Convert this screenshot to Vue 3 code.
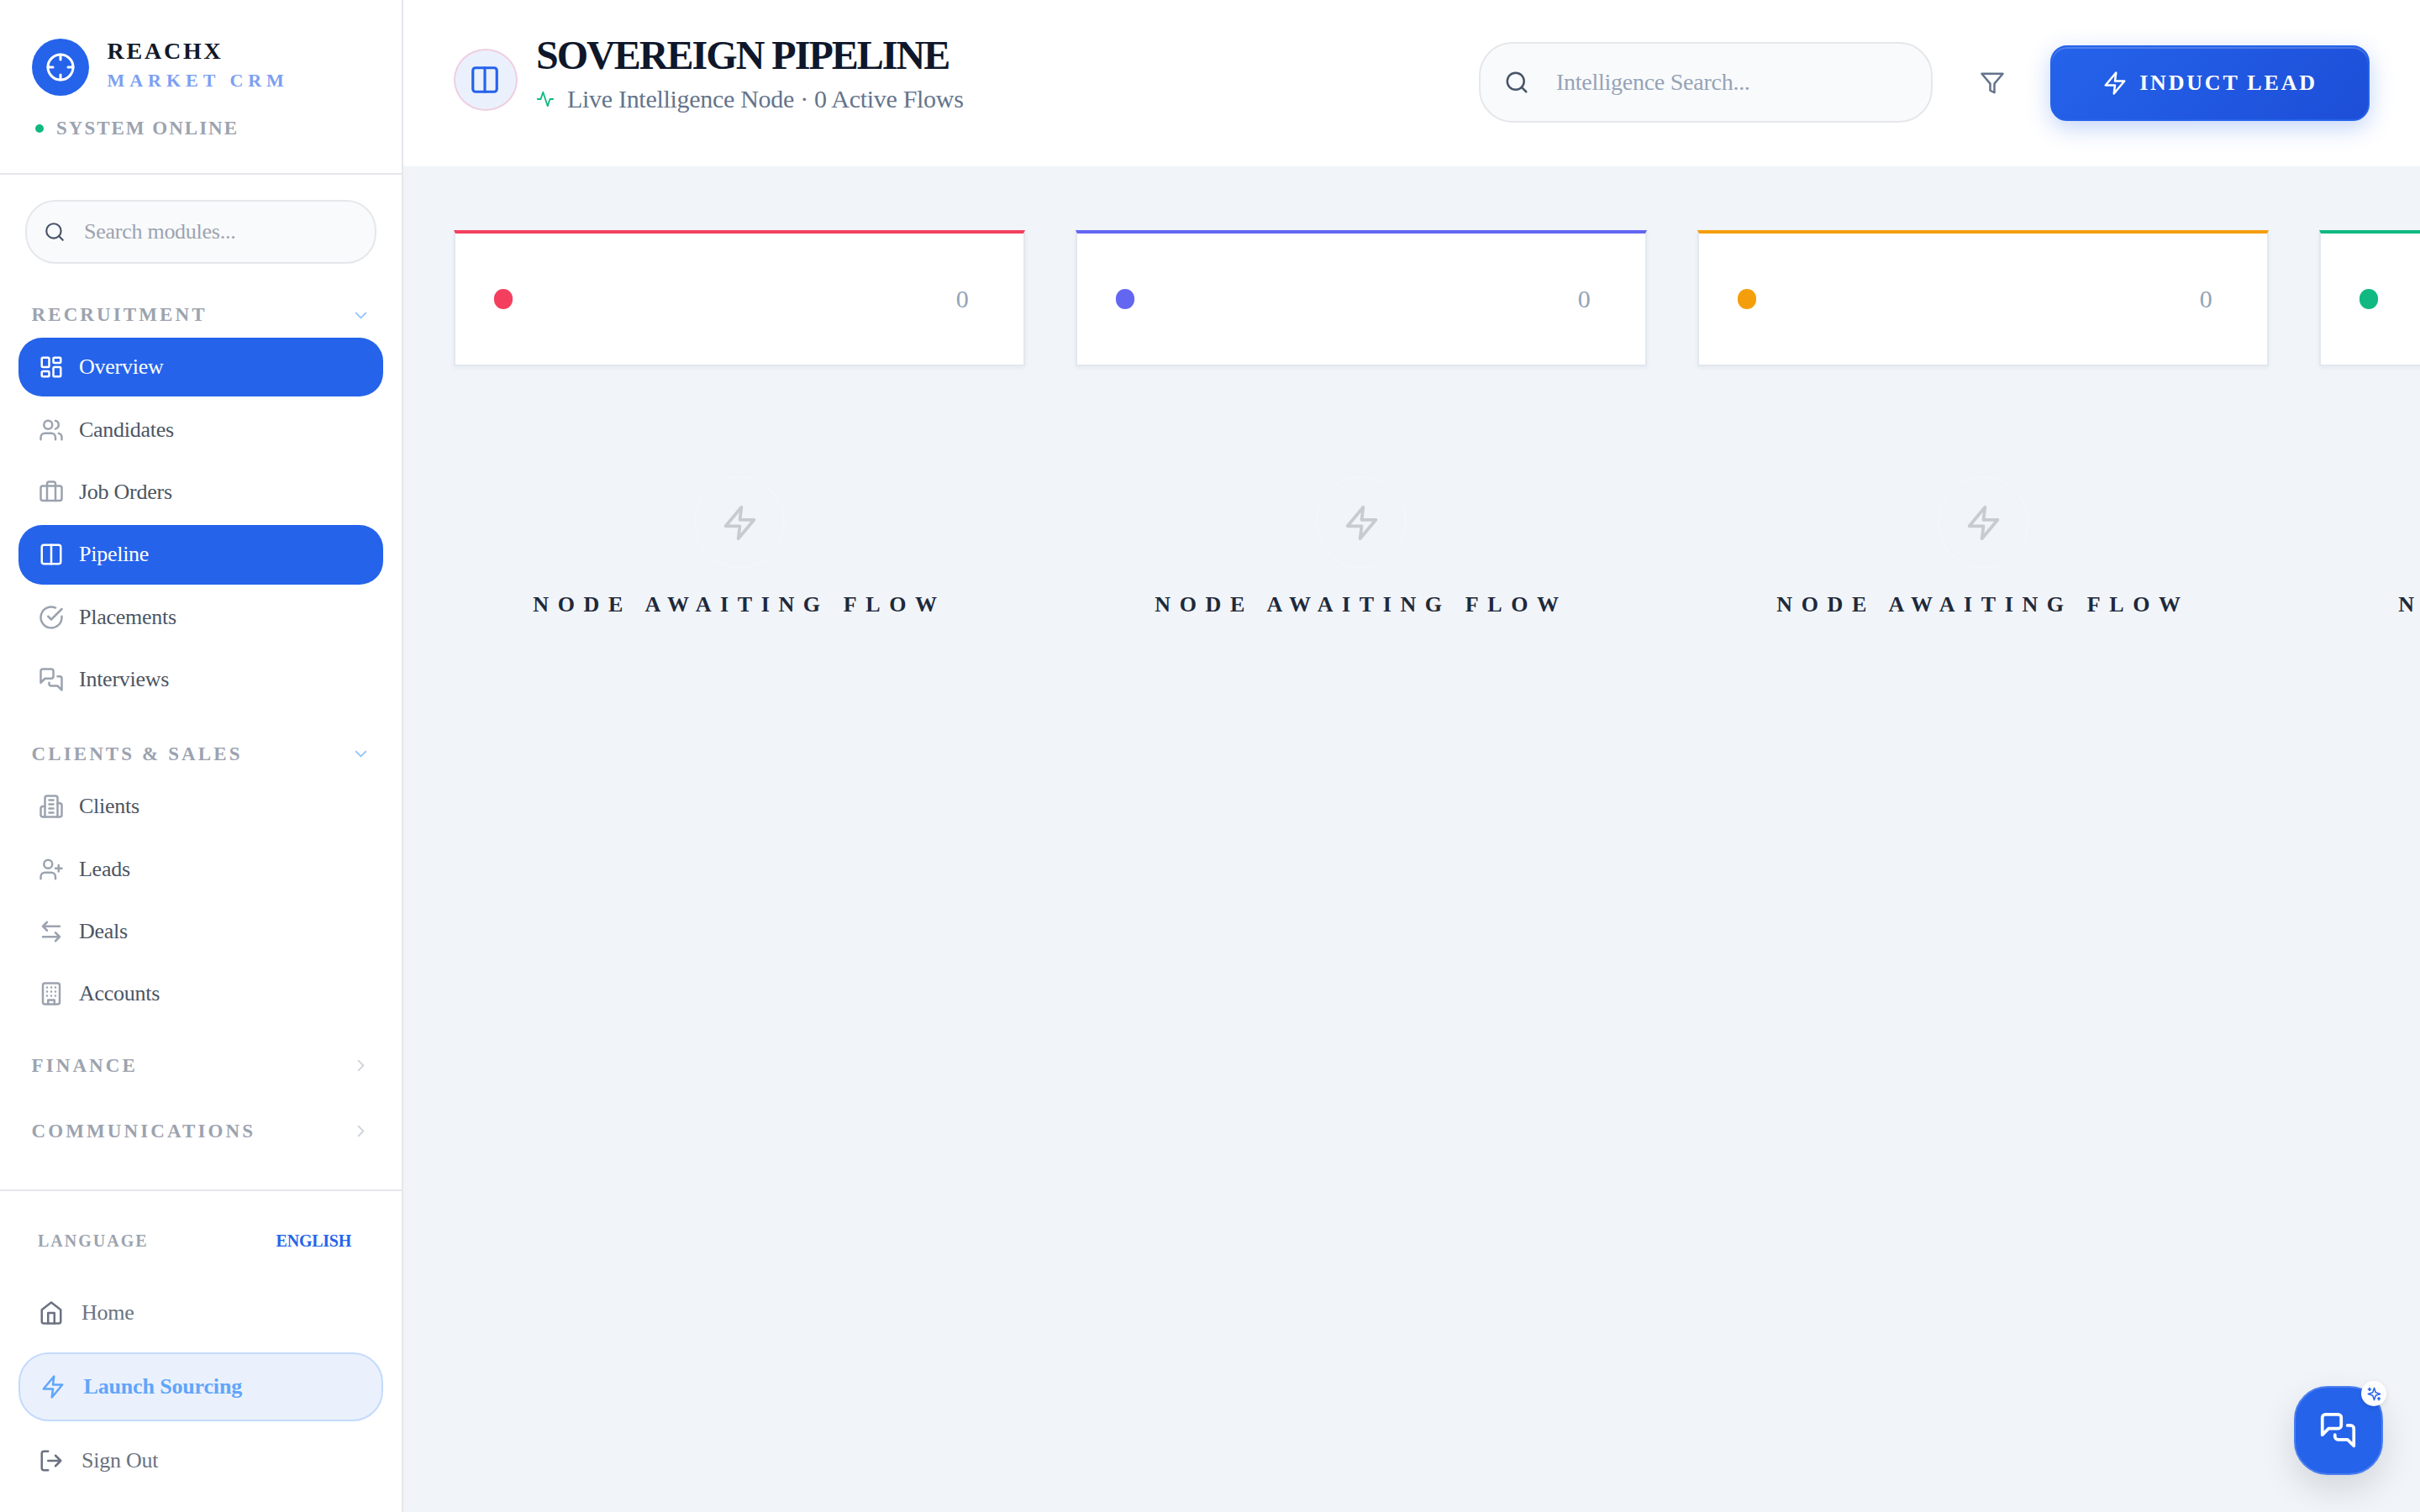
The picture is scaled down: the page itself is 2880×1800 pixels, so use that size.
<script setup>
const icons = {
  crosshair: '<circle cx="12" cy="12" r="10"/><path d="M22 12h-4M6 12H2M12 6V2M12 22v-4"/>',
  search: '<circle cx="11" cy="11" r="8"/><path d="m21 21-4.3-4.3"/>',
  chevronDown: '<path d="m6 9 6 6 6-6"/>',
  chevronRight: '<path d="m9 18 6-6-6-6"/>',
  dashboard: '<rect width="7" height="9" x="3" y="3" rx="1"/><rect width="7" height="5" x="14" y="3" rx="1"/><rect width="7" height="9" x="14" y="12" rx="1"/><rect width="7" height="5" x="3" y="16" rx="1"/>',
  users: '<path d="M16 21v-2a4 4 0 0 0-4-4H6a4 4 0 0 0-4 4v2"/><circle cx="9" cy="7" r="4"/><path d="M22 21v-2a4 4 0 0 0-3-3.87"/><path d="M16 3.13a4 4 0 0 1 0 7.75"/>',
  briefcase: '<path d="M16 20V4a2 2 0 0 0-2-2h-4a2 2 0 0 0-2 2v16"/><rect width="20" height="14" x="2" y="6" rx="2"/>',
  columns: '<rect width="18" height="18" x="3" y="3" rx="2"/><path d="M12 3v18"/>',
  check: '<path d="M22 11.08V12a10 10 0 1 1-5.93-9.14"/><path d="m9 11 3 3L22 4"/>',
  messages: '<path d="M14 9a2 2 0 0 1-2 2H6l-4 4V4c0-1.1.9-2 2-2h8a2 2 0 0 1 2 2v5Z"/><path d="M18 9h2a2 2 0 0 1 2 2v11l-4-4h-6a2 2 0 0 1-2-2v-1"/>',
  offices: '<path d="M6 22V4a2 2 0 0 1 2-2h8a2 2 0 0 1 2 2v18Z"/><path d="M6 12H4a2 2 0 0 0-2 2v6a2 2 0 0 0 2 2h2"/><path d="M18 9h2a2 2 0 0 1 2 2v9a2 2 0 0 1-2 2h-2"/><path d="M10 6h4M10 10h4M10 14h4M10 18h4"/>',
  userPlus: '<path d="M16 21v-2a4 4 0 0 0-4-4H6a4 4 0 0 0-4 4v2"/><circle cx="9" cy="7" r="4"/><path d="M19 8v6M22 11h-6"/>',
  swap: '<path d="M8 3 4 7l4 4M4 7h16M16 21l4-4-4-4M20 17H4"/>',
  building: '<rect width="16" height="20" x="4" y="2" rx="2"/><path d="M9 22v-4h6v4"/><path d="M8 6h.01M16 6h.01M12 6h.01M12 10h.01M12 14h.01M16 10h.01M16 14h.01M8 10h.01M8 14h.01"/>',
  home: '<path d="m3 9 9-7 9 7v11a2 2 0 0 1-2 2H5a2 2 0 0 1-2-2z"/><path d="M9 22V12h6v10"/>',
  bolt: '<path d="M13 2 3 14h9l-1 8 10-12h-9z"/>',
  logout: '<path d="M9 21H5a2 2 0 0 1-2-2V5a2 2 0 0 1 2-2h4"/><path d="m16 17 5-5-5-5M21 12H9"/>',
  activity: '<path d="M22 12h-4l-3 9L9 3l-3 9H2"/>',
  filter: '<path d="M22 3H2l8 9.46V19l4 2v-8.54z"/>',
  sparkles: '<path d="m12 3-1.912 5.813a2 2 0 0 1-1.275 1.275L3 12l5.813 1.912a2 2 0 0 1 1.275 1.275L12 21l1.912-5.813a2 2 0 0 1 1.275-1.275L21 12l-5.813-1.912a2 2 0 0 1-1.275-1.275L12 3Z"/><path d="M5 3v4M19 17v4M3 5h4M17 19h4"/>'
}

const sections = [
  {
    key: 'recruitment', title: 'RECRUITMENT', open: true,
    items: [
      { label: 'Overview', icon: 'dashboard', active: true },
      { label: 'Candidates', icon: 'users' },
      { label: 'Job Orders', icon: 'briefcase' },
      { label: 'Pipeline', icon: 'columns', active: true },
      { label: 'Placements', icon: 'check' },
      { label: 'Interviews', icon: 'messages' }
    ]
  },
  {
    key: 'clients', title: 'CLIENTS & SALES', open: true,
    items: [
      { label: 'Clients', icon: 'offices' },
      { label: 'Leads', icon: 'userPlus' },
      { label: 'Deals', icon: 'swap' },
      { label: 'Accounts', icon: 'building' }
    ]
  },
  { key: 'finance', title: 'FINANCE', open: false, items: [] },
  { key: 'communications', title: 'COMMUNICATIONS', open: false, items: [] }
]

const columns = ['rose', 'indigo', 'amber', 'emerald']
</script>

<template>
  <div class="app">
    <aside class="sidebar">
      <div class="brand">
        <div class="brand-row">
          <div class="logo"><svg class="icon i36" viewBox="0 0 24 24" v-html="icons.crosshair" /></div>
          <div>
            <div class="brand-name">REACHX</div>
            <div class="brand-sub">MARKET CRM</div>
          </div>
        </div>
        <div class="status"><span class="status-dot"></span>SYSTEM ONLINE</div>
      </div>

      <div class="module-search">
        <svg class="icon i26" viewBox="0 0 24 24" v-html="icons.search" />
        <span>Search modules...</span>
      </div>

      <nav class="nav">
        <section v-for="s in sections" :key="s.key" :class="['group', s.key]">
          <div class="group-head">
            <span>{{ s.title }}</span>
            <svg :class="['icon', 'i23', s.open ? 'open' : 'closed']" viewBox="0 0 24 24" v-html="s.open ? icons.chevronDown : icons.chevronRight" />
          </div>
          <a v-for="item in s.items" :key="item.label" :class="['item', { active: item.active }]">
            <svg class="icon i30" viewBox="0 0 24 24" v-html="icons[item.icon]" />
            <span>{{ item.label }}</span>
          </a>
        </section>
      </nav>

      <div class="foot">
        <div class="language"><span class="lang-label">LANGUAGE</span><span class="lang-value">ENGLISH</span></div>
        <a class="foot-link"><svg class="icon i30" viewBox="0 0 24 24" v-html="icons.home" /><span>Home</span></a>
        <a class="launch"><svg class="icon i30" viewBox="0 0 24 24" v-html="icons.bolt" /><span>Launch Sourcing</span></a>
        <a class="foot-link"><svg class="icon i30" viewBox="0 0 24 24" v-html="icons.logout" /><span>Sign Out</span></a>
      </div>
    </aside>

    <main class="main">
      <header class="topbar">
        <div class="page-badge"><svg class="icon i38" viewBox="0 0 24 24" v-html="icons.columns" /></div>
        <div class="heading">
          <h1>SOVEREIGN PIPELINE</h1>
          <p><svg class="icon i22" viewBox="0 0 24 24" v-html="icons.activity" /><span>Live Intelligence Node · 0 Active Flows</span></p>
        </div>
        <div class="search">
          <svg class="icon i30" viewBox="0 0 24 24" v-html="icons.search" />
          <span>Intelligence Search...</span>
        </div>
        <button class="filter"><svg class="icon i30" viewBox="0 0 24 24" v-html="icons.filter" /></button>
        <button class="induct"><svg class="icon i30" viewBox="0 0 24 24" v-html="icons.bolt" /><span>INDUCT LEAD</span></button>
      </header>

      <div class="board">
        <div v-for="c in columns" :key="c" :class="['column', c]">
          <div class="card"><span class="dot"></span><span class="count">0</span></div>
          <div class="empty">
            <div class="ring"><svg class="icon i45" viewBox="0 0 24 24" v-html="icons.bolt" /></div>
            <div class="empty-text">NODE AWAITING FLOW</div>
          </div>
        </div>
      </div>
    </main>

    <div class="chat">
      <svg class="icon i45" viewBox="0 0 24 24" v-html="icons.messages" />
      <div class="chat-badge"><svg class="icon i19" viewBox="0 0 24 24" v-html="icons.sparkles" /></div>
    </div>
  </div>
</template>

<style>
body { margin: 0; overflow: hidden; }
</style>

<style scoped>
.app {
  position: relative;
  display: flex;
  width: 2880px;
  height: 1800px;
  overflow: hidden;
  background: #f1f5f9;
  font-family: "Liberation Serif", "Times New Roman", serif;
  font-size: 26px;
  letter-spacing: -0.01em;
}
.app * { box-sizing: border-box; }

.icon {
  display: block;
  flex: none;
  fill: none;
  stroke: currentColor;
  stroke-width: 2;
  stroke-linecap: round;
  stroke-linejoin: round;
}
.i19 { width: 19px; height: 19px; }
.i22 { width: 22px; height: 22px; }
.i23 { width: 23px; height: 23px; }
.i26 { width: 26px; height: 26px; }
.i30 { width: 30px; height: 30px; }
.i36 { width: 36px; height: 36px; }
.i38 { width: 38px; height: 38px; }
.i45 { width: 45px; height: 45px; }

/* Sidebar */
.sidebar {
  display: flex;
  flex-direction: column;
  flex: none;
  box-sizing: border-box;
  width: 480px;
  height: 1800px;
  background: #fff;
  border-right: 2px solid #e5e7eb;
  box-shadow: 2px 0 12px rgba(0, 0, 0, 0.015);
}
.brand {
  height: 208px;
  padding: 46px 0 0 38px;
  border-bottom: 2px solid #e5e7eb;
}
.brand-row { display: flex; gap: 21.5px; height: 68px; }
.logo {
  display: flex;
  align-items: center;
  justify-content: center;
  width: 68px;
  height: 68px;
  border-radius: 50%;
  background: #2563eb;
  color: #fff;
}
.brand-name {
  font-size: 28px;
  font-weight: 700;
  line-height: 29px;
  letter-spacing: 2.8px;
  color: #111827;
}
.brand-sub {
  margin-top: 9px;
  font-size: 22px;
  font-weight: 700;
  line-height: 24px;
  letter-spacing: 5.97px;
  color: #7c9ff2;
}
.status {
  display: flex;
  align-items: center;
  gap: 15px;
  margin: 27px 0 0 4px;
  font-size: 23px;
  font-weight: 700;
  line-height: 24px;
  letter-spacing: 2px;
  color: #9ca3af;
}
.status-dot { width: 10px; height: 10px; border-radius: 50%; background: #10b981; }

.module-search {
  display: flex;
  align-items: center;
  flex: none;
  gap: 22px;
  height: 76px;
  margin: 30px 30px 0;
  padding-left: 20px;
  border: 2px solid #e5e7eb;
  border-radius: 36px;
  background: #f9fafb;
  color: #9ca3af;
}
.module-search .icon { color: #475569; }

.nav { flex: 1; padding: 34px 22px 0; overflow: hidden; }
.group-head {
  display: flex;
  align-items: center;
  justify-content: space-between;
  height: 54px;
  padding: 0 15px 0 15.5px;
  font-size: 23px;
  font-weight: 700;
  letter-spacing: 3.1px;
  color: #9ca3af;
}
.open { color: #93c5fd; }
.closed { color: #d1d5db; }
.clients { margin-top: 26.6px; }
.finance { margin-top: 23px; }
.communications { margin-top: 24px; }
.item {
  display: flex;
  align-items: center;
  gap: 18px;
  height: 70.4px;
  margin-bottom: 4px;
  padding-left: 24px;
  border-radius: 28px;
  color: #4b5563;
}
.item .icon { color: #9ca3af; }
.item.active { background: #2563eb; color: #fff; }
.item.active .icon { color: #fff; }

.foot {
  height: 384px;
  padding: 29px 22px 0;
  border-top: 2px solid #e5e7eb;
}
.language {
  display: flex;
  align-items: center;
  justify-content: space-between;
  height: 60px;
  padding: 0 38px 0 23px;
  font-size: 20px;
  font-weight: 700;
}
.lang-label { letter-spacing: 2px; color: #9ca3af; }
.lang-value { letter-spacing: -0.25px; color: #2563eb; }
.foot-link {
  display: flex;
  align-items: center;
  gap: 21px;
  height: 76px;
  padding-left: 24px;
  color: #6b7280;
}
.language + .foot-link { margin-top: 18px; }
.launch {
  display: flex;
  align-items: center;
  gap: 21.5px;
  height: 82px;
  margin: 9px 0;
  padding-left: 24px;
  border: 2px solid #c3dafd;
  border-radius: 36px;
  background: #eaf1fd;
  font-weight: 700;
  letter-spacing: -0.16px;
  color: #60a5fa;
}

/* Main area */
.main { flex: 1; min-width: 0; }
.topbar {
  display: flex;
  align-items: flex-start;
  height: 198px;
  padding: 0 60px;
  background: #fff;
}
.page-badge {
  display: flex;
  align-items: center;
  justify-content: center;
  flex: none;
  width: 76px;
  height: 74px;
  margin-top: 58px;
  padding-right: 2px;
  border: 2px solid #efcfe0;
  border-radius: 50%;
  background: #eaf1fd;
  color: #2563eb;
}
.heading { margin: 42px 0 0 22px; }
h1 {
  margin: 0;
  font-size: 48px;
  font-weight: 700;
  line-height: 48px;
  letter-spacing: -1.97px;
  color: #0f172a;
}
.heading p {
  display: flex;
  align-items: center;
  gap: 15px;
  margin: 10px 0 0;
  font-size: 30px;
  line-height: 36px;
  letter-spacing: -0.3px;
  color: #64748b;
}
.heading .icon { color: #10b981; }
.search {
  display: flex;
  align-items: center;
  gap: 32px;
  width: 540px;
  height: 96px;
  margin: 50px 0 0 auto;
  padding-left: 28px;
  border: 2px solid #e5e7eb;
  border-radius: 40px;
  background: #f9fafb;
  font-size: 28px;
  color: #94a3b8;
}
.search .icon { color: #475569; }
button { font-family: inherit; padding: 0; }
.filter {
  display: flex;
  align-items: center;
  justify-content: center;
  width: 80px;
  height: 80px;
  margin: 59px 29px 0 31px;
  border: 0;
  background: none;
  color: #64748b;
}
.induct {
  display: flex;
  align-items: center;
  justify-content: center;
  gap: 14px;
  width: 380px;
  height: 90px;
  margin-top: 54px;
  border: 2px solid #2563eb;
  border-radius: 20px;
  background: linear-gradient(135deg, #2563eb, #1d4ed8);
  box-shadow: 0 8px 28px rgba(37, 99, 235, 0.28), inset 0 2px 0 rgba(255, 255, 255, 0.2);
  font-size: 26px;
  font-weight: 700;
  letter-spacing: 2.8px;
  color: #fff;
}

.board { display: flex; gap: 60px; padding: 76px 0 0 60px; }
.column { flex: none; width: 680px; }
.rose { --accent: #f43f5e; }
.indigo { --accent: #6366f1; }
.amber { --accent: #f59e0b; }
.emerald { --accent: #10b981; }
.card {
  display: flex;
  align-items: center;
  justify-content: space-between;
  height: 162px;
  padding: 0 65.5px 0 46px;
  border: 2px solid #e2e8f0;
  border-top: 4px solid var(--accent);
  background: #fff;
  box-shadow: 0 2px 6px rgba(0, 0, 0, 0.05);
}
.dot { width: 22px; height: 24px; border-radius: 11px; background: var(--accent); }
.count { font-size: 30px; color: #94a3b8; }
.empty { display: flex; flex-direction: column; align-items: center; padding-top: 131px; }
.ring {
  display: flex;
  align-items: center;
  justify-content: center;
  width: 108px;
  height: 110px;
  border: 2px solid #f3f6fa;
  border-radius: 50%;
  color: #c8cbd0;
}
.empty-text {
  margin-top: 28px;
  font-size: 26px;
  font-weight: 700;
  line-height: 30px;
  letter-spacing: 10.6px;
  color: #1e293b;
}

/* Floating chat launcher */
.chat {
  position: absolute;
  right: 44px;
  bottom: 44px;
  display: flex;
  align-items: center;
  justify-content: center;
  width: 106px;
  height: 106px;
  padding: 0 1px 1px 0;
  border: 2px solid #4b7fee;
  border-radius: 40px;
  background: #2563eb;
  box-shadow: 0 16px 40px rgba(0, 0, 0, 0.13);
  color: #fff;
}
.chat-badge {
  position: absolute;
  top: -8px;
  right: -6px;
  display: flex;
  align-items: center;
  justify-content: center;
  width: 30px;
  height: 30px;
  border-radius: 50%;
  background: #fff;
  box-shadow: 0 2px 6px rgba(0, 0, 0, 0.1);
  color: #2563eb;
}
</style>
